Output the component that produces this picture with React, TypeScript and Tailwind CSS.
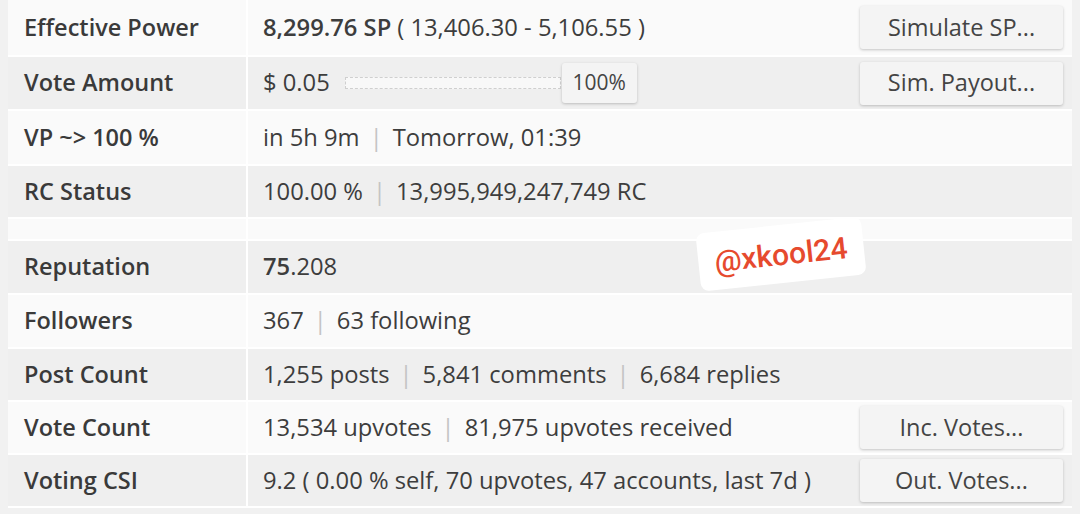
import type { ReactNode } from "react";

const font = { fontFamily: '"Open Sans", "Noto Sans", sans-serif' };

function Sep() {
  return <span className="mx-[10px] text-[#c4c4c4]">|</span>;
}

function Btn({ children }: { children: ReactNode }) {
  return (
    <button className="ml-auto mr-[9px] flex h-[43px] w-[203px] items-center justify-center rounded-[3px] bg-[#f4f4f4] text-[23.5px] text-[#444] shadow-[0_1px_3px_rgba(0,0,0,0.22)]">
      {children}
    </button>
  );
}

function Row({
  label,
  h,
  shade,
  children,
}: {
  label: string;
  h: string;
  shade: boolean;
  children?: ReactNode;
}) {
  return (
    <div className={`flex ${h} ${shade ? "bg-[#efefef]" : "bg-[#fafafa]"}`}>
      <div className="flex w-[238px] shrink-0 items-center pl-[16px] text-[23.5px] font-semibold text-[#3a3a3a]">
        {label}
      </div>
      <div className="w-[2px] shrink-0 bg-white" />
      <div className="flex flex-1 items-center pl-[15px] text-[23.75px] text-[#3d3d3d]">
        {children}
      </div>
    </div>
  );
}

export default function App() {
  return (
    <div
      style={font}
      className="relative h-[514px] w-[1080px] overflow-hidden bg-[#f1f1f1] px-[8px]"
    >
      <div className="flex flex-col gap-[2px] bg-white pb-[2px]">
        <Row label="Effective Power" h="h-[55px]" shade={false}>
          <span className="font-semibold">8,299.76 SP</span>
          <span className="ml-[6px]">( 13,406.30 - 5,106.55 )</span>
          <Btn>Simulate SP...</Btn>
        </Row>
        <Row label="Vote Amount" h="h-[52px]" shade={true}>
          <span>$ 0.05</span>
          <div className="ml-[15px] flex items-center">
            <div className="h-[12px] w-[216px] border border-dashed border-[#cfcfcf] bg-[#f8f8f8]" />
            <div className="ml-[1px] flex h-[40px] w-[75px] items-center justify-center rounded-[3px] bg-[#f4f4f4] text-[21px] text-[#444] shadow-[0_1px_3px_rgba(0,0,0,0.22)]">
              100%
            </div>
          </div>
          <Btn>Sim. Payout...</Btn>
        </Row>
        <Row label="VP ~> 100 %" h="h-[53px]" shade={false}>
          <span>in 5h 9m</span>
          <Sep />
          <span>Tomorrow, 01:39</span>
        </Row>
        <Row label="RC Status" h="h-[51px]" shade={true}>
          <span>100.00 %</span>
          <Sep />
          <span>13,995,949,247,749 RC</span>
        </Row>
        <div className="flex h-[20px] bg-[#fafafa]">
          <div className="w-[238px] shrink-0" />
          <div className="w-[2px] shrink-0 bg-white" />
        </div>
        <Row label="Reputation" h="h-[52px]" shade={true}>
          <span className="font-semibold">75</span>
          <span>.208</span>
        </Row>
        <Row label="Followers" h="h-[52px]" shade={false}>
          <span>367</span>
          <Sep />
          <span>63 following</span>
        </Row>
        <Row label="Post Count" h="h-[51px]" shade={true}>
          <span>1,255 posts</span>
          <Sep />
          <span>5,841 comments</span>
          <Sep />
          <span>6,684 replies</span>
        </Row>
        <Row label="Vote Count" h="h-[51px]" shade={false}>
          <span>13,534 upvotes</span>
          <Sep />
          <span>81,975 upvotes received</span>
          <Btn>Inc. Votes...</Btn>
        </Row>
        <Row label="Voting CSI" h="h-[51px]" shade={true}>
          <span>9.2 ( 0.00 % self, 70 upvotes, 47 accounts, last 7d )</span>
          <Btn>Out. Votes...</Btn>
        </Row>
      </div>

      <div className="absolute left-[698px] top-[225px] flex h-[58px] w-[166px] -rotate-[6deg] items-center justify-center rounded-[8px] bg-white">
        <span
          className="text-[30px] font-medium text-[#e64a2e]"
          style={{ fontFamily: 'Roboto, "Noto Sans", sans-serif' }}
        >
          @xkool24
        </span>
      </div>
    </div>
  );
}
